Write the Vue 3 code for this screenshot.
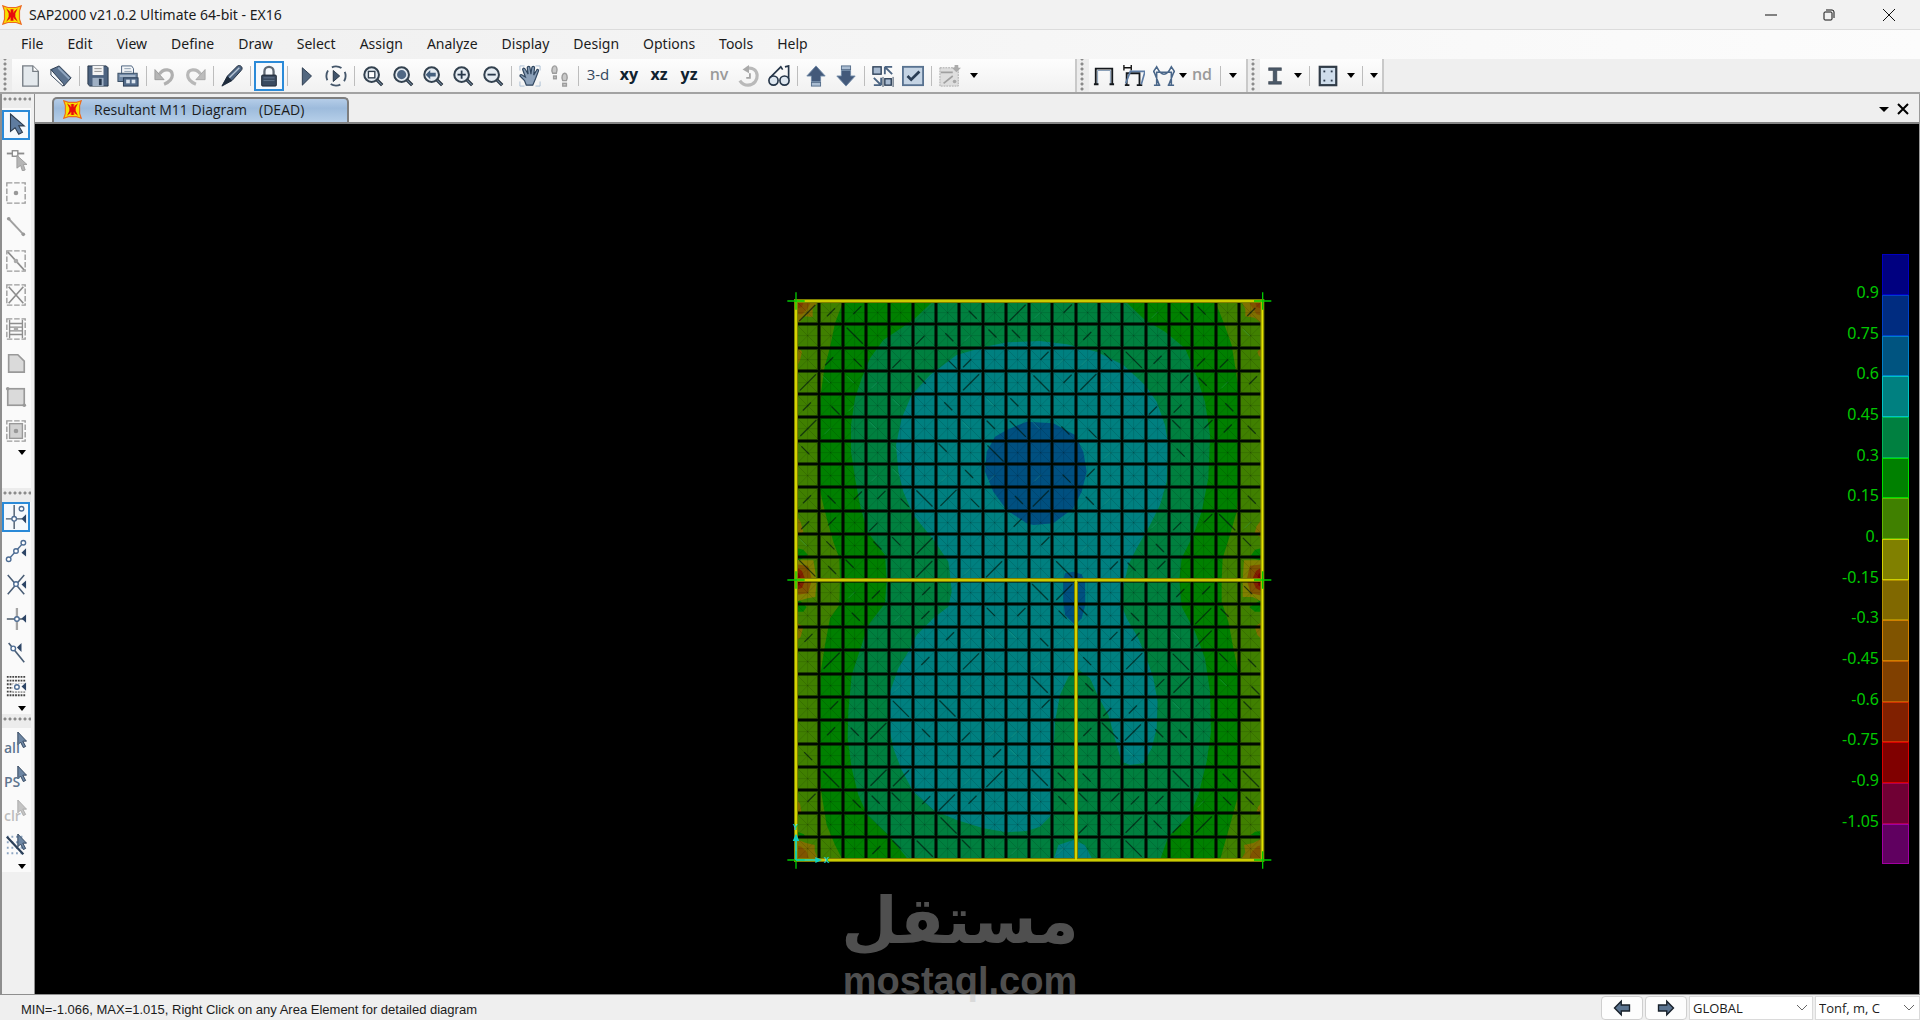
<script setup>
import { ref } from 'vue'

const menus = ['File', 'Edit', 'View', 'Define', 'Draw', 'Select', 'Assign', 'Analyze', 'Display', 'Design', 'Options', 'Tools', 'Help']

const lens = '<path d="M16 16l6 6" stroke="#1c2733" stroke-width="3.6"/><path d="M16.5 16.5l5 5" stroke="#6d8299" stroke-width="1.4"/><circle cx="10.5" cy="10.5" r="8" fill="#e4ebf2" stroke="#33414f" stroke-width="2.2"/>'
const pointer = '<path d="M14 1v14l3-3 3 6 2.5-1.2-3-5.8h4z" fill="#6d86a3" stroke="#2c4059"/>'
const pointerGrey = '<path d="M14 1v14l3-3 3 6 2.5-1.2-3-5.8h4z" fill="#c4c4c4" stroke="#a8a8a8"/>'
const greyFrame = '<rect x="2" y="2" width="20" height="22" fill="none" stroke="#9a9a9a" stroke-width="1.5" stroke-dasharray="6 2"/>'
const snapTip = '<path d="M23 8v9l-5-4.5z" fill="#2d4566"/>'
const node = (x, y) => `<circle cx="${x}" cy="${y}" r="2.500" fill="#fff" stroke="#4e6d94" stroke-width="1.5"/>`

const icons = {
  sap: '<path d="M1 1l6 2h10l6-2-2 6v10l2 6-6-2H7l-6 2 2-6V7z" fill="#f8e000" stroke="#ee6a1c" stroke-width="1.4"/><path d="M5 4l5 4V5h4v3l5-4-3 6v4l3 6-5-4v3h-4v-3l-5 4 3-6v-4z" fill="#e80c0c"/><path d="M10 5v4M14 5v4M10 15v4M14 15v4" stroke="#f8a000"/>',
  fresh: '<path d="M3 1h11l6 6v16H3z" fill="#e4e9ed" stroke="#777e85" stroke-width="1.5"/><path d="M14 1v6h6" fill="#fff" stroke="#777e85" stroke-width="1.5"/>',
  open: '<path d="M1 5l9-4 13 13-8 9z" fill="#5a718d" stroke="#25364a"/><path d="M1 5v6l13 12 1-2z" fill="#f7f9fb" stroke="#25364a"/><path d="M9 3l12 12" stroke="#8fa5be" stroke-width="2"/>',
  save: '<path d="M1 1h20l2 2v20H3l-2-2z" fill="#4d6380" stroke="#202f42"/><rect x="6" y="1" width="12" height="10" fill="#f4f4f4"/><path d="M8 4h8M8 7h8" stroke="#8b8b8b"/><rect x="6" y="14" width="12" height="9" fill="#9fb0c4"/><rect x="13" y="15" width="3" height="7" fill="#26374c"/>',
  print: '<path d="M5 1h11l2 3v6H5z" fill="#f2f5f8" stroke="#445b78"/><path d="M8 4h7M8 7h8" stroke="#8898aa"/><rect x="1" y="9" width="21" height="9" fill="#7189a6" stroke="#34495f"/><path d="M3 12h17" stroke="#e6edf4"/><rect x="7" y="14" width="16" height="9" fill="#536b89" stroke="#263950"/><rect x="10" y="16" width="4" height="4" fill="#dce5ef"/><rect x="16" y="16" width="4" height="4" fill="#dce5ef"/>',
  undo: '<path d="M6 10c4-7 14-6 14 1 0 5-4 8-9 10" fill="none" stroke="#b0b0b0" stroke-width="3.500"/><path d="M1 5v11h10z" fill="#b5b5b5" stroke="#999"/>',
  redo: '<path d="M18 10C14 3 4 4 4 11c0 5 4 8 9 10" fill="none" stroke="#b8b8b8" stroke-width="3.500"/><path d="M23 5v11H13z" fill="#bcbcbc" stroke="#a5a5a5"/>',
  pen: '<path d="M1 23L7 12 18 1c3-2 7 2 4 5L12 17z" fill="#4c6380" stroke="#1c2939"/><path d="M9 14L20 3" stroke="#b7c6d6" stroke-width="1.5"/><path d="M1 23l6-11 5 5z" fill="#1e2b3b"/>',
  lock: '<path d="M7 12V7a5 5 0 0110 0v5" fill="none" stroke="#5e6873" stroke-width="2.5"/><rect x="4" y="11" width="16" height="12" rx="1" fill="#394a60" stroke="#19232f"/><path d="M6 14h12M6 17h12" stroke="#66788f"/>',
  play: '<path d="M8 3l10 9-10 10z" fill="#52677f" stroke="#26374a"/>',
  step: '<circle cx="12" cy="12" r="10.5" fill="none" stroke="#44566a" stroke-width="2" stroke-dasharray="11 5.5" stroke-dashoffset="5"/><path d="M9 6l7 6-7 6z" fill="#42556c" stroke="#1f2e3e"/>',
  zoomRect: lens + '<rect x="7" y="7" width="7" height="7" fill="#fff" stroke="#33414f" stroke-width="1.5"/>',
  zoomAll: lens + '<circle cx="10.5" cy="10.5" r="5" fill="#4f6784"/>',
  zoomBack: lens + '<path d="M4 10.5l5-5v3h6v4H9v3z" fill="#44607f"/>',
  zoomIn: lens + '<path d="M6 10.5h9M10.5 6v9" stroke="#26374a" stroke-width="2"/>',
  zoomOut: lens + '<path d="M6 10.5h9" stroke="#26374a" stroke-width="2"/>',
  hand: '<path d="M1 6V1h5M18 1h5v5M23 18v5h-5M6 23H1v-5" fill="none" stroke="#a9bdd2"/><path d="M8 22L6 17 1 12c0-2 2-2 4 0l2 1L4 5c0-2 2-2 3 0l3 5-1-7c0-2 3-2 3 0l1 7 1-7c0-2 3-2 3 0l-1 8 3-5c1-2 3-1 2 1l-3 8-3 7z" fill="#8ba0b9" stroke="#30465f" stroke-width="1.3"/>',
  feet: '<g fill="#c9c9c9" stroke="#9c9c9c" stroke-width="1.5"><path d="M4 9C2 5 4 1 6 1s4 3 2 8zM15 17c-2-4 0-8 2-8s4 3 2 8z"/><rect x="5" y="12" width="3" height="3"/><rect x="15" y="20" width="4" height="3"/></g>',
  rotate: '<path d="M9 4c15-4 16 17 2 18-4 0-7-2-9-5" fill="none" stroke="#b9b9b9" stroke-width="3.500"/><path d="M5 5l7-5v9z" fill="#a9a9a9"/><path d="M13 9v5H9" stroke="#a5a5a5" stroke-width="2" fill="none"/>',
  glasses: '<g fill="#dde6ef" stroke="#243447" stroke-width="1.8"><circle cx="6" cy="17" r="5"/><circle cx="18" cy="17" r="5"/><path d="M2 14L14 2l2 3M22.5 15V1l-4 1" fill="none"/></g>',
  up: '<path d="M12 1l10 11h-5v6H7v-6H2z" fill="#43597a" stroke="#6f88a5"/><rect x="7" y="19" width="10" height="4" fill="#a9bcd1" stroke="#536b89"/>',
  down: '<path d="M12 23L2 12h5V6h10v6h5z" fill="#43597a" stroke="#6f88a5"/><rect x="7" y="1" width="10" height="4" fill="#a9bcd1" stroke="#536b89"/>',
  shrink: '<g fill="#a8bad0" stroke="#2c3f57" stroke-width="1.5"><rect x="1" y="2" width="9" height="8"/><rect x="14" y="15" width="7" height="7"/></g><path d="M14 2h8M14 2v8M15 3l7 7M10 22v-8M10 22H2M9 21l-7-7" stroke="#4b6482" stroke-width="2"/><path d="M12 13v11M23 13v11" stroke="#2c3f57"/>',
  check: '<rect x="1" y="2" width="22" height="20" fill="#c5d4e4" stroke="#587290" stroke-width="2"/><path d="M6 12l4 4 9-9" fill="none" stroke="#2b3e55" stroke-width="3"/>',
  plotGrey: '<rect x="1" y="3" width="20" height="20" fill="#dedede" stroke="#a6a6a6" stroke-dasharray="2 1"/><path d="M2 8h13M5 20L15 12" stroke="#a0a0a0" stroke-width="1.8"/><path d="M17 0h4v3h3l-5 5-5-5h3z" fill="#ababab"/><circle cx="17" cy="18" r="2" fill="#a8a8a8"/>',
  frame: '<path d="M3 21V4h18v17" fill="none" stroke="#14181d" stroke-width="2"/><path d="M5 21V6h14v15" fill="none" stroke="#8198b2"/><path d="M1 21h5M18 21h5" stroke="#14181d" stroke-width="2"/>',
  deformed: '<path d="M1 0v6M9 0v6M1 3h8" stroke="#111" stroke-width="1.5"/><path d="M4 22V9h14v13M2 22h5M15 22h6" fill="none" stroke="#14181d" stroke-width="2"/><path d="M3 20L8 7h16l-4 14" fill="none" stroke="#5d7ca5" stroke-width="1.8"/>',
  forces: '<path d="M4 22V8h16v14M0 8L4 2q8 16 16 0l4 6M1 7l6 15M23 7l-6 15M1 22h7M16 22h7" fill="none" stroke="#496689" stroke-width="1.7"/>',
  ibeam: '<path d="M5 3h14v3h-5v12h5v3H5v-3h5V6H5z" fill="#4b5968" stroke="#27313c" stroke-width=".5"/>',
  section: '<rect x="3" y="2" width="18" height="20" fill="#cfddeb" stroke="#303b47" stroke-width="2.4"/><g fill="#2b3a4c"><rect x="7" y="6" width="2" height="2"/><rect x="15" y="6" width="2" height="2"/><rect x="7" y="16" width="2" height="2"/><rect x="15" y="16" width="2" height="2"/></g>',
  arrow: '<path d="M6 1v19l5-4 4 7 4-2-4-7h6z" fill="#5f7ca0" stroke="#2c3b4d" stroke-width="1.2"/>',
  reshape: '<path d="M2 7h19" stroke="#8d8d8d" stroke-width="2"/><rect x="8" y="4" width="6" height="6" fill="#fff" stroke="#8d8d8d" stroke-width="1.5"/><path d="M13 9v14l4-3 2 6 3-1-2-6h4z" fill="#b5b5b5" stroke="#9b9b9b"/>',
  drawJoint: greyFrame + '<circle cx="12" cy="13" r="2.5" fill="#999"/>',
  drawLine: '<path d="M4 4l16 17" stroke="#a0a0a0" stroke-width="2"/><circle cx="4" cy="4" r="2" fill="#999"/><circle cx="20" cy="21" r="2" fill="#999"/>',
  quickLine: greyFrame + '<path d="M3 3l18 20" stroke="#8d8d8d" stroke-width="1.8"/><circle cx="12" cy="13" r="2.5" fill="#aaa"/>',
  quickBrace: greyFrame + '<path d="M4 4l16 18M20 4L4 22" stroke="#8d8d8d" stroke-width="1.8"/>',
  quickBeam: greyFrame + '<path d="M5 3v20M19 3v20M5 7h14M5 11h14M5 15h14M5 19h14" stroke="#8d8d8d" stroke-width="1.5"/><circle cx="12" cy="13" r="2.5" fill="#aaa"/>',
  polyArea: '<path d="M4 4h10l7 7v12H4z" fill="#dadada" stroke="#999" stroke-width="1.8"/>',
  rectArea: '<rect x="3" y="4" width="18" height="18" fill="#dadada" stroke="#999" stroke-width="1.8"/><circle cx="3" cy="4" r="2" fill="#999"/><circle cx="21" cy="22" r="2" fill="#999"/>',
  quickArea: greyFrame + '<rect x="5" y="5" width="14" height="16" fill="#d2d2d2" stroke="#999" stroke-width="1.5"/><circle cx="12" cy="13" r="2.5" fill="#999"/>',
  snapPoint: '<path d="M10 0v26M1 15h18" stroke="#47586b" stroke-width="1.5"/>' + node(10, 15) + node(18, 4) + '<path d="M23 10v10l-5-5z" fill="#2d4566"/>',
  snapEnds: '<path d="M4 22L20 4" stroke="#4e6d94" stroke-width="1.5"/>' + node(4, 22) + node(12, 13) + node(20, 4) + '<path d="M23 10v9l-5-4z" fill="#2d4566"/>',
  snapCross: '<path d="M3 2l18 21M21 2L3 23" stroke="#4a5e76" stroke-width="1.7"/>' + node(12, 12) + snapTip,
  snapPerp: '<path d="M13 1v24" stroke="#a4a4a4" stroke-width="2.5"/><path d="M2 13h19" stroke="#3d4c5d" stroke-width="1.5"/>' + node(13, 13) + snapTip,
  snapLine: '<path d="M4 2l17 21" stroke="#4a5e76" stroke-width="1.8"/>' + node(9, 8) + '<path d="M18 2v10l-5-5z" fill="#2d4566"/>',
  snapGrid: '<path d="M2 2h20M2 6h20M2 10h20M2 14h20M2 18h20M2 22h20" stroke="#444" stroke-width="2" stroke-dasharray="2 1"/><rect x="8" y="9" width="16" height="9" fill="#fafafa"/>' + node(13, 13) + snapTip,
  selAll: pointer,
  selPrev: pointer,
  selClear: pointerGrey,
  selLine: '<g stroke="#8ea6c2" stroke-width="2" stroke-dasharray="2 3"><path d="M2 4h18M2 10h18M2 16h18M2 22h18"/></g><path d="M2 4l18 19" stroke="#2c4059" stroke-width="2.5"/>' + pointer,
  left: '<path d="M2 12l9-9v5h11v8H11v5z" fill="#5a738f" stroke="#17202a" stroke-width="1.8"/>',
  right: '<path d="M22 12l-9-9v5H2v8h11v5z" fill="#5a738f" stroke="#17202a" stroke-width="1.8"/>',
}

const b = (icon, label, extra = {}) => ({ icon, label, ...extra })
const t = (text, label, tone) => ({ text, label, tone })
const sep = { sep: true }
const caret = { caret: true, label: 'More' }

const mainBar = [
  b('fresh', 'New'), b('open', 'Open'), sep, b('save', 'Save'), b('print', 'Print'), sep,
  b('undo', 'Undo'), b('redo', 'Redo'), sep, b('pen', 'Refresh'), sep, b('lock', 'Unlock model', { on: true }), sep,
  b('play', 'Run'), b('step', 'Run step'), sep,
  b('zoomRect', 'Zoom window'), b('zoomAll', 'Zoom full'), b('zoomBack', 'Zoom previous'), b('zoomIn', 'Zoom in'), b('zoomOut', 'Zoom out'), sep,
  b('hand', 'Pan'), b('feet', 'Walk'), sep,
  t('3-d', '3-D view', 'plain'), t('xy', 'XY view', 'strong'), t('xz', 'XZ view', 'strong'), t('yz', 'YZ view', 'strong'), t('nv', 'Named view', 'off'),
  b('rotate', 'Rotate'), b('glasses', 'Perspective'), sep, b('up', 'Move up'), b('down', 'Move down'), sep,
  b('shrink', 'Shrink objects'), b('check', 'Display options'), sep, b('plotGrey', 'Plot'), caret,
]
const displayBar = [b('frame', 'Undeformed'), b('deformed', 'Deformed'), b('forces', 'Forces'), { caret: true, tight: true, label: 'Forces menu' }, t('nd', 'Named display', 'off'), sep, caret]
const designBar = [b('ibeam', 'Steel design'), caret, sep, b('section', 'Concrete design'), caret, sep, caret]

const sideGroups = [
  {
    name: 'Draw', items: [
      b('arrow', 'Select object', { on: true }), b('reshape', 'Reshape'), b('drawJoint', 'Draw joint'), b('drawLine', 'Draw frame'),
      b('quickLine', 'Quick frame'), b('quickBrace', 'Quick braces'), b('quickBeam', 'Quick beams'), b('polyArea', 'Poly area'), b('rectArea', 'Rectangular area'), b('quickArea', 'Quick area'),
    ],
  },
  {
    name: 'Snap', items: [
      b('snapPoint', 'Snap to points', { on: true }), b('snapEnds', 'Snap to ends'), b('snapCross', 'Snap to intersections'), b('snapPerp', 'Snap perpendicular'), b('snapLine', 'Snap to lines'), b('snapGrid', 'Snap to grid'),
    ],
  },
  {
    name: 'Select', items: [
      b('selAll', 'Select all', { tag: 'all' }), b('selPrev', 'Previous selection', { tag: 'PS' }), b('selClear', 'Clear selection', { tag: 'clr', dim: true }), b('selLine', 'Intersecting line'),
    ],
  },
]

const scale = [
  ['#000080', '#0000c0', '0.9'], ['#002c80', '#0040c8', '0.75'], ['#005480', '#0080c8', '0.6'], ['#008080', '#00c4c4', '0.45'],
  ['#008040', '#00b858', '0.3'], ['#008000', '#00dc00', '0.15'], ['#408000', '#60b800', '0.'], ['#808000', '#d0d000', '-0.15'],
  ['#806800', '#b09000', '-0.3'], ['#805400', '#d08000', '-0.45'], ['#804000', '#c06000', '-0.6'], ['#802000', '#d03000', '-0.75'],
  ['#800000', '#d80000', '-0.9'], ['#700034', '#b00050', '-1.05'], ['#600060', '#a000a0', ''],
]

/* Contour bands of the slab, in plot units (three to a pixel) */
const bands = [
  ['#008000', '190,48 165,115 150,187 133,250 122,330 118,400 118,600 125,640 140,700 160,770 178,820 180,884 178,960 150,1000 135,1080 122,1160 118,1300 118,1450 125,1530 140,1620 165,1680 188,1725 1320,1725 1330,1690 1350,1620 1372,1540 1380,1400 1375,1160 1360,1090 1345,1010 1325,950 1325,884 1328,820 1350,750 1370,680 1380,560 1378,330 1368,260 1355,180 1330,110 1305,48'],
  ['#00803f', '460,48 400,105 310,165 270,220 245,280 225,340 213,420 213,500 225,580 240,660 262,740 315,810 320,884 315,955 265,1020 245,1080 215,1170 205,1280 203,1360 215,1450 235,1530 262,1590 330,1655 385,1725 1140,1725 1165,1655 1230,1590 1255,1530 1280,1430 1293,1340 1290,1220 1275,1120 1245,1040 1205,965 1198,884 1205,820 1240,750 1265,680 1285,580 1290,450 1275,350 1245,260 1215,190 1155,140 1095,105 1035,48'],
  ['#008080', '610,187 680,172 780,168 860,178 950,200 1030,240 1095,300 1130,350 1155,420 1165,480 1160,590 1140,660 1110,720 1070,790 1045,840 1035,884 1020,950 1040,1000 1075,1060 1100,1120 1120,1180 1133,1250 1130,1330 1115,1390 1090,1435 1050,1440 1025,1430 1010,1380 985,1290 955,1235 930,1180 890,1150 865,1175 840,1230 825,1310 820,1400 815,1590 780,1625 740,1638 680,1642 610,1630 530,1605 460,1575 400,1520 365,1455 340,1390 328,1330 330,1220 355,1150 385,1100 410,1050 460,1000 505,965 515,920 512,884 505,830 465,770 400,690 370,620 355,560 348,480 365,400 395,330 450,270 530,210'],
  ['#005080', '740,410 820,415 885,450 910,500 920,560 905,620 880,670 820,715 760,720 740,715 680,675 640,620 615,560 620,500 645,455 680,435'],
  ['#005080', '855,865 880,860 905,868 915,890 916,960 905,1000 885,1020 855,990 850,950 850,885'],
  ['#008080', '820,1725 835,1680 880,1665 915,1680 938,1725'],
  ['#008000', '52,790 70,794 84,810 60,824 52,826'],
  ['#008000', '52,940 80,966 70,980 52,980'],
  ['#008000', '1443,790 1425,794 1408,818 1443,826'],
  ['#008000', '1443,945 1408,966 1425,980 1443,980'],
  ['#008000', '52,1640 72,1648 78,1660 52,1650'],
  ['#008000', '1443,1638 1425,1640 1412,1650 1443,1656'],
  ['#807000', '48,48 116,48 98,72 98,96 72,94 60,110 48,112'],
  ['#805400', '48,48 94,48 82,72 66,88 48,88'],
  ['#803c00', '48,48 72,48 66,66 48,72'],
  ['#807000', '1447,48 1384,48 1396,72 1396,94 1424,98 1447,116'],
  ['#805400', '1447,48 1405,48 1418,70 1430,88 1447,92'],
  ['#803c00', '1447,48 1424,48 1430,66 1447,72'],
  ['#808000', '48,826 100,826 110,884 106,936 82,940 48,950'],
  ['#805400', '48,838 84,842 96,884 84,925 48,930'],
  ['#802000', '48,846 66,858 76,884 66,908 48,916'],
  ['#800000', '48,860 58,866 63,884 58,900 48,906'],
  ['#808000', '1447,826 1392,826 1388,884 1388,936 1418,936 1447,950'],
  ['#805400', '1447,838 1410,842 1400,884 1412,925 1447,932'],
  ['#802000', '1447,846 1428,858 1416,884 1428,910 1447,920'],
  ['#800000', '1447,860 1436,866 1430,884 1436,902 1447,906'],
  ['#807000', '48,1725 115,1725 104,1698 104,1680 78,1674 48,1662'],
  ['#805400', '48,1725 88,1725 80,1700 64,1685 48,1680'],
  ['#807000', '1447,1725 1382,1725 1396,1702 1392,1680 1420,1674 1447,1660'],
  ['#805400', '1447,1725 1406,1725 1416,1700 1432,1684 1447,1680'],
  ['#807000', '48,180 66,200 60,226 48,250'],
  ['#807000', '48,690 62,712 70,740 48,756'],
  ['#807000', '48,1012 70,1025 62,1055 48,1070'],
  ['#807000', '48,1540 60,1556 64,1582 48,1590'],
  ['#807000', '1447,184 1432,200 1436,212 1447,220'],
  ['#807000', '1447,700 1430,724 1424,745 1447,760'],
  ['#807000', '1447,1010 1424,1025 1432,1050 1447,1064'],
  ['#807000', '1447,1550 1434,1566 1428,1586 1447,1592'],
]

const snap = v => Math.round(v / 3) * 3
const xs = Array.from({ length: 21 }, (_, i) => snap(48 + i * 69.95))
const ys = Array.from({ length: 25 }, (_, i) => snap(48 + i * 69.88))

let seed = 7
const rnd = () => { seed = (seed * 16807) % 2147483647; return seed / 2147483647 }
let mesh = ''
let dark = ''
let light = ''
for (let r = 0; r < 24; r++) {
  for (let c = 0; c < 20; c++) {
    const x = xs[c], y = ys[r]
    mesh += `M${x} ${y}l70 70m0-70l-70 70M${x + 35} ${y}v70M${x} ${y + 35}h70`
    const k = rnd()
    const len = k < 0.1 ? 48 : 24
    if (k < 0.4) {
      const down = rnd() < 0.5
      const off = 8 + rnd() * (54 - len)
      dark += down ? `M${x + off} ${y + off}l${len} ${len}` : `M${x + off} ${y + 70 - off}l${len} -${len}`
    } else if (k > 0.88) {
      light += rnd() < 0.5 ? `M${x + 12} ${y + 16}l20 20` : `M${x + 16} ${y + 52}l20 -20`
    }
  }
}
const gridPath = xs.slice(1, -1).map(x => `M${x} 48V1725`).join('') + ys.slice(1, -1).map(y => `M48 ${y}H1447`).join('')
const crosses = [[48, 48], [1448, 48], [48, 885], [1448, 885], [48, 1725], [1448, 1725]]

const coords = ref('GLOBAL')
const units = ref('Tonf, m, C')
</script>

<template>
  <div class="app">
    <header class="titlebar">
      <svg class="logo" viewBox="0 0 24 24" v-html="icons.sap"></svg>
      <h1>SAP2000 v21.0.2 Ultimate 64-bit - EX16</h1>
      <div class="winbtns">
        <button aria-label="Minimize"><svg viewBox="0 0 12 12"><path d="M0 6h12" /></svg></button>
        <button aria-label="Restore"><svg viewBox="0 0 12 12"><rect x="1" y="3" width="8" height="8" rx="1" /><path d="M3 1h6q2 0 2 2v6" /></svg></button>
        <button aria-label="Close"><svg viewBox="0 0 12 12"><path d="M0 0l12 12M12 0L0 12" /></svg></button>
      </div>
    </header>

    <nav class="menubar">
      <button v-for="m in menus" :key="m">{{ m }}</button>
    </nav>

    <div class="toolrow">
      <div v-for="(bar, bi) in [mainBar, displayBar, designBar]" :key="bi" class="toolbar" :class="'bar' + bi">
        <span class="grip"></span>
        <template v-for="(it, i) in bar" :key="i">
          <span v-if="it.sep" class="sep"></span>
          <button v-else-if="it.caret" class="caret" :class="{ tight: it.tight }" :aria-label="it.label"><i></i></button>
          <button v-else-if="it.text" class="tool word" :class="it.tone" :aria-label="it.label">{{ it.text }}</button>
          <button v-else class="tool" :class="{ on: it.on }" :aria-label="it.label">
            <svg viewBox="0 0 24 24" v-html="icons[it.icon]"></svg>
          </button>
        </template>
      </div>
    </div>

    <div class="work">
      <aside class="side">
        <section v-for="g in sideGroups" :key="g.name" :class="['group', g.name.toLowerCase()]" :aria-label="g.name">
          <span class="hgrip"></span>
          <button v-for="it in g.items" :key="it.label" class="stool" :class="{ on: it.on, dim: it.dim }" :aria-label="it.label">
            <span v-if="it.tag">{{ it.tag }}</span>
            <svg viewBox="0 0 24 26" v-html="icons[it.icon]"></svg>
          </button>
          <button class="scaret" :aria-label="g.name + ' more'"><i></i></button>
        </section>
      </aside>

      <main class="doc">
        <div class="tabs">
          <button class="tab">
            <svg class="logo" viewBox="0 0 24 24" v-html="icons.sap"></svg>
            <span>Resultant M11 Diagram</span><span>(DEAD)</span>
          </button>
          <div class="tabctl">
            <button aria-label="Window list"><i></i></button>
            <button aria-label="Close tab"><svg viewBox="0 0 12 12"><path d="M1 1l10 10M11 1L1 11" /></svg></button>
          </div>
        </div>

        <div class="canvas">
          <svg class="plot" viewBox="0 0 1500 1770" role="img" aria-label="Resultant M11 contour diagram">
            <rect x="48" y="48" width="1399" height="1677" fill="#408000" />
            <polygon v-for="(p, i) in bands" :key="i" :points="p[1]" :fill="p[0]" />
            <path :d="mesh" class="mesh" />
            <path :d="light" class="light" />
            <path :d="dark" class="dark" />
            <path :d="gridPath" class="gridsoft" />
            <path :d="gridPath" class="gridline" />
            <path class="edgesoft" d="M48 48H1447V1725H48ZM48 885H1447M888 885V1725" />
            <path class="edge" d="M48 48H1447V1725H48ZM48 885H1447M888 885V1725" />
            <path v-for="(c, i) in crosses" :key="'c' + i" class="cross" :d="`M${c[0] - 26} ${c[1]}h52M${c[0]} ${c[1] - 26}v52`" />
            <path class="axis" d="M48 1725V1650M48 1725H118" />
            <path class="axishead" d="M38 1668l10-22 10 22zM106 1716l20 9-20 9z" />
            <text x="132" y="1733" class="axname">X</text>
            <text x="39" y="1634" class="axname">Y</text>
          </svg>

          <ol class="legend">
            <li v-for="(s, i) in scale" :key="i">
              <span class="val">{{ s[2] }}</span>
              <span class="chip" :style="{ background: s[0], borderColor: s[1] }"></span>
            </li>
          </ol>

          <div class="mark">
            <span class="arabic" lang="ar" dir="rtl">مستقل</span>
            <span class="latin">mostaql.com</span>
          </div>
        </div>
      </main>
    </div>

    <footer class="status">
      <p>MIN=-1.066, MAX=1.015, Right Click on any Area Element for detailed diagram</p>
      <div class="statctl">
        <button aria-label="Previous"><svg viewBox="0 0 24 24" v-html="icons.left"></svg></button>
        <button aria-label="Next"><svg viewBox="0 0 24 24" v-html="icons.right"></svg></button>
        <label class="pick wide">
          <select v-model="coords" aria-label="Coordinate system"><option>GLOBAL</option></select>
          <svg viewBox="0 0 12 8"><path d="M1 1l5 5 5-5" /></svg>
        </label>
        <label class="pick">
          <select v-model="units" aria-label="Units"><option>Tonf, m, C</option></select>
          <svg viewBox="0 0 12 8"><path d="M1 1l5 5 5-5" /></svg>
        </label>
      </div>
    </footer>
  </div>
</template>

<style>
body { background: #efefef; }
</style>

<style scoped>
.app {
  display: flex;
  flex-direction: column;
  min-height: 100vh;
  font-family: "Open Sans", "Noto Sans", sans-serif;
  font-size: 14px;
  color: #1c1c1c;
  background: #efefef;
}
* { box-sizing: border-box; }
button {
  margin: 0;
  padding: 0;
  border: 0;
  background: none;
  font: inherit;
  color: inherit;
}
svg { fill: none; display: block; }
i {
  display: block;
  width: 8px;
  border: 4px solid transparent;
  border-top: 5px solid #000;
  border-bottom: 0;
}

.titlebar {
  display: flex;
  align-items: center;
  height: 30px;
  padding-left: 2px;
  background: #f2f2f2;
  border-bottom: 1px solid #dcdcdc;
}
.titlebar .logo { width: 20px; height: 20px; }
h1 { margin: 0 0 0 7px; font-family: "Noto Sans", sans-serif; font-size: 14px; font-weight: 400; line-height: 20px; }
.winbtns { display: flex; margin-left: auto; }
.winbtns button { width: 58px; height: 28px; display: grid; place-items: center; }
.winbtns button:last-child { width: 62px; }
.winbtns svg { width: 12px; height: 12px; stroke: #111; overflow: visible; }

.menubar {
  display: flex;
  gap: 24px;
  height: 29px;
  padding: 0 0 2px 21px;
  font-family: "Noto Sans", sans-serif;
  background: linear-gradient(90deg, #efefef, #fcfcfc);
}

.toolrow { display: flex; height: 35px; border-bottom: 2px solid #a2a2a2; }
.toolbar {
  display: flex;
  align-items: center;
  height: 33px;
  background: linear-gradient(#fdfdfd, #f1f1f1);
  border-right: 2px solid #c9c9c9;
}
.bar0 { width: 1077px; }
.bar1 { width: 171px; }
.bar2 { width: 136px; }
.grip {
  width: 12px;
  height: 33px;
  margin-right: 4px;
  flex: none;
  background: radial-gradient(circle at 5px 3px, #8a8a8a 1px, transparent 2px) 0 2px / 12px 5px, #ececec;
}
.sep { width: 1px; height: 20px; margin: 0 3px; background: #bdbdbd; flex: none; }
.tool { width: 30px; height: 30px; display: grid; place-items: center; flex: none; }
.tool svg { width: 22px; height: 22px; }
.tool.on, .stool.on { border: 2px solid #2a8ad8; background: #f5f9fd; }
.word { font-size: 16px; line-height: 26px; padding-bottom: 4px; }
.word.plain { width: 32px; font-size: 15px; color: #33475e; }
.word.strong { color: #10222f; font-weight: 700; }
.word.off { color: #9a9a9a; font-weight: 600; }
.caret { width: 17px; height: 30px; display: grid; place-items: center; flex: none; }
.caret.tight { width: 8px; }
.bar1 .grip { margin-right: 0; }
.bar2 .grip { margin-right: 0; }
.bar2 .tool { width: 30px; }
.bar2 .caret { width: 16px; }

.work { display: flex; flex: 1; }
.side {
  width: 35px;
  flex: none;
  border-left: 2px solid #8e8e8e;
  border-right: 1px solid #8e8e8e;
  background: #f0f0f0;
}
.group { width: 29px; display: flex; flex-direction: column; background: #fafafa; }
.group.draw { height: 394px; }
.hgrip {
  height: 14px;
  background: radial-gradient(circle at 3px 5px, #8a8a8a 1px, transparent 2px) 0 0 / 5px 14px, #ececec;
}
.draw .hgrip { margin-bottom: 2px; }
.stool {
  position: relative;
  width: 28px;
  height: 30px;
  margin-bottom: 4px;
  display: grid;
  place-items: center;
}
.stool svg { width: 22px; height: 24px; }
.stool span {
  position: absolute;
  left: 2px;
  bottom: 1px;
  font-size: 14px;
  line-height: 18px;
  font-weight: 600;
  color: #5f7690;
}
.stool.dim span { color: #bdbdbd; }
.scaret { height: 8px; padding: 0 0 4px 16px; }

.doc { display: flex; flex-direction: column; flex: 1; min-width: 0; border-right: 1px solid #9a9a9a; }
.tabs {
  display: flex;
  align-items: flex-end;
  height: 30px;
  padding-left: 17px;
  border-bottom: 2px solid #848484;
}
.tab {
  display: flex;
  align-items: center;
  gap: 12px;
  width: 297px;
  height: 25px;
  padding: 0 0 2px 9px;
  border: 2px solid #7e7e7e;
  border-bottom: 0;
  border-radius: 5px 5px 0 0;
  background: linear-gradient(#b5cde8, #9dbbdc 40%, #b6cfe9);
}
.tab .logo { width: 19px; height: 19px; }
.tabctl { display: flex; align-items: center; gap: 8px; height: 26px; margin-left: auto; padding-right: 10px; }
.tabctl i { width: 10px; border-width: 5px 5px 0; }
.tabctl svg { width: 12px; height: 12px; stroke: #000; stroke-width: 2; }

.canvas { position: relative; display: flex; flex: 1; justify-content: space-between; background: #000; }
.plot { width: 500px; height: 590px; margin: 161px 0 0 745px; flex: none; }
.mesh { stroke: #000; stroke-opacity: 0.12; stroke-width: 3; }
.light { stroke: #40d0a0; stroke-opacity: 0.25; stroke-width: 3; }
.dark { stroke: #001810; stroke-opacity: 0.65; stroke-width: 4; }
.gridsoft { stroke: #000; stroke-opacity: 0.5; stroke-width: 12; }
.gridline { stroke: #000800; stroke-width: 6; }
.edgesoft { stroke: #808000; stroke-width: 12; }
.edge { stroke: #e4e400; stroke-width: 5; }
.cross { stroke: #00c800; stroke-width: 4; }
.axis { stroke: #10d0c0; stroke-width: 5; }
.axishead { fill: #10d0c0; }
.axname { fill: #10d0c0; font-size: 24px; font-weight: 700; }

.legend { list-style: none; margin: 130px 10px 0 0; padding: 0; width: 80px; }
.legend li { display: flex; justify-content: flex-end; align-items: flex-end; height: 41px; }
.legend li:nth-child(3n) { height: 40px; }
.val {
  margin: 0 3px -8px 0;
  font-family: "Noto Sans", sans-serif;
  font-size: 16px;
  line-height: 22px;
  color: #00c800;
}
.chip { width: 27px; height: 100%; border: 1px solid; }

.mark {
  position: absolute;
  left: 810px;
  bottom: -9px;
  z-index: 2;
  width: 230px;
  display: flex;
  flex-direction: column;
  align-items: center;
  color: #bcbcbc;
  opacity: 0.42;
  font-weight: 700;
  pointer-events: none;
}
.arabic { font-family: "DejaVu Sans", sans-serif; font-size: 65px; line-height: 76px; white-space: nowrap; }
.latin { font-family: "Liberation Sans", Arial, sans-serif; font-size: 38px; line-height: 44px; }

.status {
  display: flex;
  align-items: center;
  justify-content: space-between;
  height: 26px;
  border-top: 1px solid #8e8e8e;
  background: #efefef;
}
.status p { margin: 3px 0 0 21px; font-family: "Liberation Sans", Arial, sans-serif; font-size: 13px; }
.statctl { display: flex; gap: 2px; }
.statctl button {
  width: 42px;
  height: 24px;
  border: 1px solid #cfcfcf;
  border-radius: 4px;
  background: #fdfdfd;
  display: grid;
  place-items: center;
}
.statctl button svg { width: 18px; height: 18px; }
.pick { display: flex; align-items: center; position: relative; width: 105px; height: 24px; background: #fff; border: 1px solid #dadada; }
.pick.wide { width: 124px; }
.pick select {
  appearance: none;
  width: 100%;
  border: 0;
  background: none;
  padding: 0 3px;
  font-family: "Open Sans", sans-serif;
  font-size: 13px;
  color: #1c1c1c;
}
.pick svg { position: absolute; right: 4px; width: 12px; height: 8px; stroke: #666; pointer-events: none; }
</style>
